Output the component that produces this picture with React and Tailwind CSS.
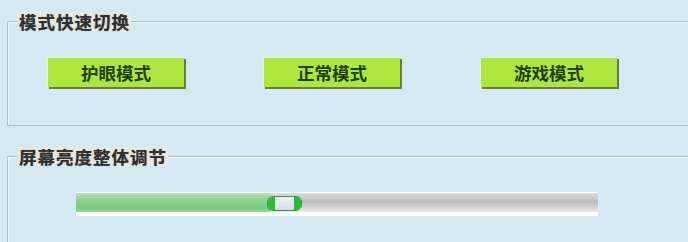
const font = { fontFamily: '"Noto Sans CJK SC", "Noto Sans", sans-serif' };

function ModeButton({ label }) {
  return (
    <button
      type="button"
      className="w-[137px] h-[30px] bg-[#aee63e] border-t border-l border-[#e4f7b4] shadow-[2px_2px_0_#69765c] text-[17.5px] font-bold text-[#22400e] leading-none flex items-center justify-center"
    >
      {label}
    </button>
  );
}

function GroupBox({ title, className, children }) {
  return (
    <fieldset
      className={`ml-[7px] w-[700px] border border-[#b3c0c5] shadow-[inset_1px_1px_0_#f2f9fc] ${className}`}
    >
      <legend className="ml-[10px] px-[1px] bg-[#e7e8e2] text-[17.5px] font-bold text-[#303030] leading-[19px] tracking-[1px] [text-shadow:0_0_1px_#777]">
        {title}
      </legend>
      {children}
    </fieldset>
  );
}

export default function App() {
  return (
    <div style={font} className="w-[688px] h-[242px] overflow-hidden bg-[#d4e9f2] pt-[12px]">
      <GroupBox title="模式快速切换" className="h-[114px]">
        <div className="flex mt-[26px] ml-[39px]">
          <ModeButton label="护眼模式" />
          <div className="ml-[79px]">
            <ModeButton label="正常模式" />
          </div>
          <div className="ml-[80px]">
            <ModeButton label="游戏模式" />
          </div>
        </div>
      </GroupBox>

      <GroupBox title="屏幕亮度整体调节" className="mt-[21px] h-[120px]">
        <div className="relative ml-[68px] mt-[26px] w-[522px] pt-[1px] pb-[4px] bg-white">
          <div className="h-[19px] flex bg-[linear-gradient(#dcdcdc,#bdbdbd_45%,#d6d6d6_80%,#ececec)]">
            <div className="w-[194px] h-full bg-[linear-gradient(#b3e3ad,#8fd18c_40%,#7fc77d_80%,#9ad896)]" />
          </div>
          <div className="absolute left-[191px] top-[4px] w-[35px] h-[15px] flex rounded-[6px] overflow-hidden border border-[#27a232]">
            <div className="w-[7px] h-full bg-[#2fb83b]" />
            <div className="flex-1 h-full bg-[linear-gradient(#eef0f8,#d8dcec)]" />
            <div className="w-[7px] h-full bg-[#2fb83b]" />
          </div>
        </div>
      </GroupBox>
    </div>
  );
}
